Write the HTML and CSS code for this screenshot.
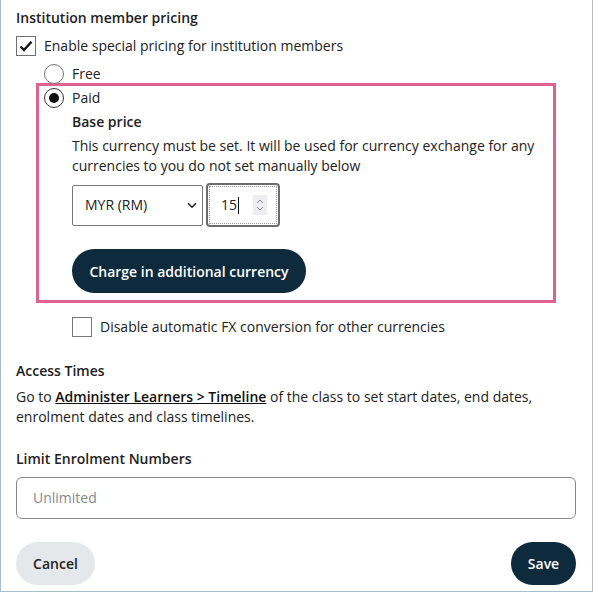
FILE: index.html
```html
<!DOCTYPE html>
<html>
<head>
<meta charset="utf-8">
<link rel="stylesheet" href="styles.css">
</head>
<body>
<div class="frame">
  <div class="heading">Institution member pricing</div>
  <div class="row check-row">
    <span class="checkbox checked">
      <svg width="14" height="12" viewBox="0 0 14 12"><path d="M1.5 6.5 L5 10 L12.5 1.8" fill="none" stroke="#111" stroke-width="2.4"/></svg>
    </span>
    <span class="label">Enable special pricing for institution members</span>
  </div>
  <div class="row radio-row free-row">
    <span class="radio"></span>
    <span class="label">Free</span>
  </div>
  <div class="highlight">
    <div class="row radio-row">
      <span class="radio selected"><span class="dot"></span></span>
      <span class="label">Paid</span>
    </div>
    <div class="paid-body">
      <div class="subheading">Base price</div>
      <p class="desc">This currency must be set. It will be used for currency exchange for any currencies to you do not set manually below</p>
      <div class="controls">
        <div class="select">
          <span>MYR (RM)</span>
          <svg width="10" height="7" viewBox="0 0 10 7"><path d="M1 1.2 L5 5.2 L9 1.2" fill="none" stroke="#222" stroke-width="1.6"/></svg>
        </div>
        <div class="number">
          <span class="num-text">15</span><span class="caret"></span>
          <span class="spinner">
            <svg width="10" height="14" viewBox="0 0 10 14"><path d="M2 5 L5 2 L8 5 M2 9 L5 12 L8 9" fill="none" stroke="#888" stroke-width="1"/></svg>
          </span>
        </div>
      </div>
      <button class="btn dark charge">Charge in additional currency</button>
    </div>
  </div>
  <div class="row check-row fx-row">
    <span class="checkbox small"></span>
    <span class="label">Disable automatic FX conversion for other currencies</span>
  </div>
  <div class="heading access">Access Times</div>
  <p class="para">Go to <span class="link">Administer Learners &gt; Timeline</span> of the class to set start dates, end dates, enrolment dates and class timelines.</p>
  <div class="heading limit">Limit Enrolment Numbers</div>
  <div class="text-input">Unlimited</div>
  <div class="actions">
    <button class="btn light">Cancel</button>
    <button class="btn dark">Save</button>
  </div>
</div>
</body>
</html>
```

FILE: styles.css
```css
* { box-sizing: border-box; }
html, body { margin: 0; padding: 0; background: #fff; }
body {
  font-family: "Open Sans", "Noto Sans", sans-serif;
  font-size: 14px;
  line-height: 20px;
  color: #222;
}
.frame {
  width: 593px;
  height: 592px;
  border: 1px solid #a5bfcc;
  border-top: none;
  padding: 8px 15px 0 15px;
  overflow: hidden;
}
.heading {
  font-weight: 600;
  height: 20px;
}
.row {
  display: flex;
  align-items: center;
  height: 20px;
}
.check-row { margin-top: 8px; }
.checkbox {
  width: 20px;
  height: 20px;
  border: 1px solid #6f6f6f;
  display: flex;
  align-items: center;
  justify-content: center;
  flex: none;
}
.checkbox.small { width: 20px; height: 20px; border-color: #777; }
.label { margin-left: 8px; }
.radio-row { padding-left: 28px; }
.free-row { margin-top: 8px; }
.radio {
  width: 20px;
  height: 20px;
  border: 1.5px solid #777;
  border-radius: 50%;
  display: flex;
  align-items: center;
  justify-content: center;
  flex: none;
}
.radio.selected { border-color: #333; }
.dot {
  width: 10px;
  height: 10px;
  border-radius: 50%;
  background: #111;
}
.highlight {
  margin-top: -1px;
  margin-left: 20px;
  width: 520px;
  border: 3px solid #e2628f;
  padding: 2px 0 7px 0;
}
.highlight .radio-row { padding-left: 5px; }
.paid-body { padding-left: 33px; }
.subheading { font-weight: 600; margin-top: 4px; }
.desc { margin: 4px 0 0 0; padding-right: 10px; }
.controls {
  margin-top: 7px;
  display: flex;
  align-items: center;
  height: 44px;
}
.select {
  width: 131px;
  height: 41px;
  border: 1px solid #777;
  border-radius: 2px;
  display: flex;
  align-items: center;
  justify-content: space-between;
  padding: 0 5px 0 12px;
}
.number {
  margin-left: 3px;
  width: 74px;
  height: 44px;
  border: 2px solid #6b6b6b;
  border-radius: 4px;
  outline: 1px dotted #999;
  outline-offset: -4px;
  display: flex;
  align-items: center;
  padding-left: 13px;
}
.caret {
  width: 1px;
  height: 17px;
  background: #111;
  margin-left: 1px;
}
.spinner {
  margin-left: 14px;
  width: 14px;
  height: 20px;
  background: #eeeef2;
  display: flex;
  align-items: center;
  justify-content: center;
}
.btn {
  font-family: "Open Sans", "Noto Sans", sans-serif;
  font-size: 14px;
  font-weight: 600;
  border: none;
  border-radius: 22px;
  height: 44px;
  padding: 0 18px;
  white-space: nowrap;
  cursor: pointer;
}
.btn.dark { background: #0e2b3d; color: #fff; }
.btn.light { background: #e5e8eb; color: #222; }
.charge { margin-top: 22px; width: 234px; padding: 0; }
.fx-row { margin-top: 14px; padding-left: 56px; }
.access { margin-top: 24px; }
.para { margin: 6px 0 0 0; padding-right: 20px; }
.link {
  font-weight: 600;
  color: #111;
  text-decoration: underline;
}
.limit { margin-top: 22px; }
.text-input {
  margin-top: 8px;
  height: 42px;
  width: 560px;
  border: 1px solid #888;
  border-radius: 6px;
  padding: 0 16px;
  display: flex;
  align-items: center;
  color: #888;
}
.actions {
  margin-top: 23px;
  width: 560px;
  display: flex;
  justify-content: space-between;
}
.actions .btn { height: 43px; }
.actions .btn.light { width: 79px; padding: 0; }
.actions .btn.dark { width: 65px; padding: 0; }
```
